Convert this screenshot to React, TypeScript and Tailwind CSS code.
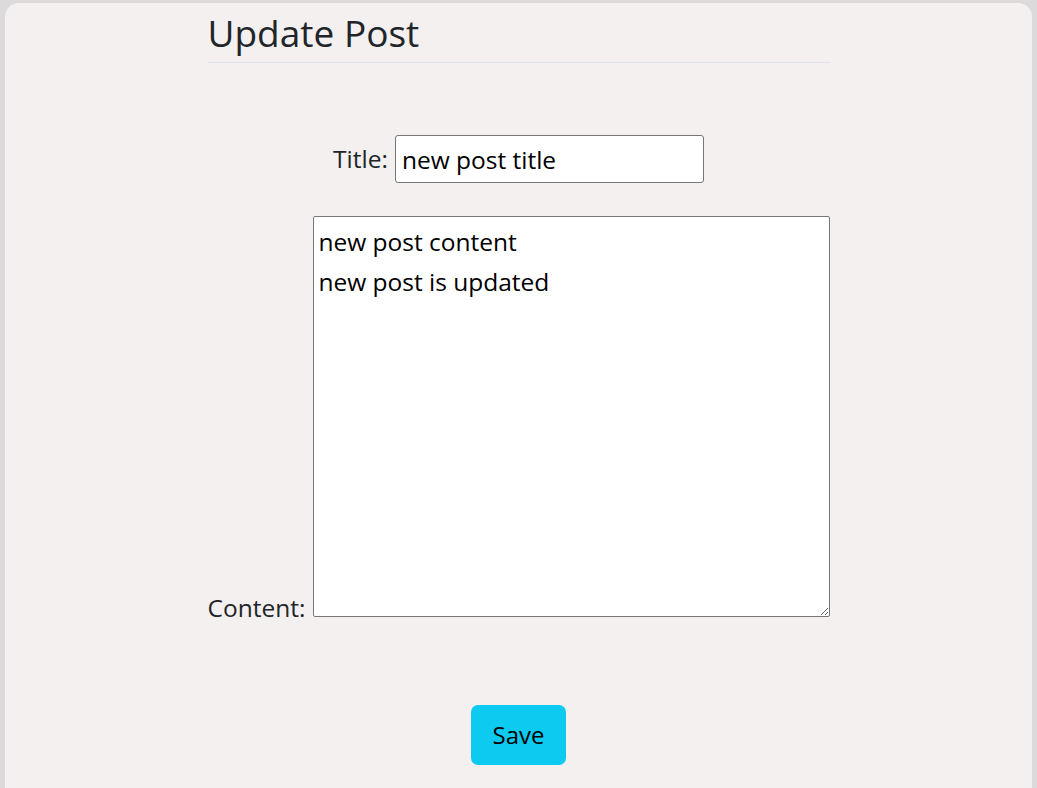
export default function App() {
  return (
    <div className="min-h-[788px] bg-[#dcdada] pt-[3px] px-[5px] font-['Open_Sans',sans-serif] text-[#212529]">
      <div className="min-h-[785px] rounded-t-[14px] bg-[#f3f0ef]">
        <div className="mx-auto w-[622px]">
          <h2 className="pt-[6px] pb-[5px] text-[37px] leading-[48px] border-b border-[#dfe2e8]">
            Update Post
          </h2>

          <form className="pt-[72px]">
            <div className="flex items-center justify-center gap-[7px]">
              <label htmlFor="title" className="text-[24.5px]">Title:</label>
              <input
                id="title"
                defaultValue="new post title"
                className="h-[48px] w-[309px] rounded-[3px] border border-[#767676] bg-white px-[6px] text-[24.5px] text-black outline-none"
              />
            </div>

            <div className="mt-[33px] whitespace-nowrap text-[24.5px] leading-[28px]">
              <label htmlFor="content">Content:</label>
              <textarea
                id="content"
                defaultValue={"new post content\nnew post is updated"}
                className="ml-[8px] inline-block h-[401px] w-[517px] align-baseline rounded-[2px] border border-[#767676] bg-white px-[4px] py-[5px] text-[24.5px] leading-[40px] text-black outline-none"
              />
            </div>

            <div className="mt-[83px] flex justify-center">
              <button
                type="button"
                className="h-[60px] w-[95px] rounded-[7px] bg-[#0dcaf0] text-[24px] text-black"
              >
                Save
              </button>
            </div>
          </form>
        </div>
      </div>
    </div>
  );
}
